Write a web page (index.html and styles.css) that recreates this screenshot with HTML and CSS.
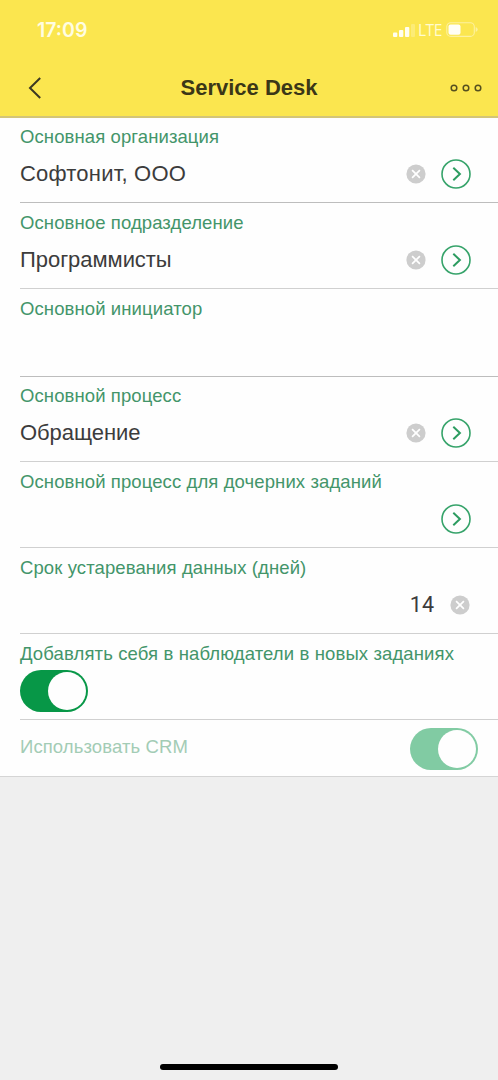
FILE: index.html
```html
<!DOCTYPE html>
<html lang="ru">
<head>
<meta charset="utf-8">
<title>Service Desk</title>
<link rel="stylesheet" href="styles.css">
</head>
<body>
<svg class="defs" width="0" height="0">
  <symbol id="clear" viewBox="0 0 20 20"><circle cx="10" cy="10" r="9.6" fill="#cdcdcd"/><path d="M6.1 6.1l7.8 7.8M13.9 6.1l-7.8 7.8" stroke="#fff" stroke-width="1.7" fill="none"/></symbol>
  <symbol id="open" viewBox="0 0 30 30"><circle cx="15" cy="15" r="14" fill="none" stroke="#36a36a" stroke-width="1.6"/><path d="M12.3 8.8l6.6 6.2-6.6 6.2" fill="none" stroke="#2c9c60" stroke-width="2"/></symbol>
</svg>
<div class="screen">
  <header class="header">
    <div class="status">
      <span class="time">17:09</span>
      <div class="indicators">
        <svg class="signal" width="22" height="14" viewBox="0 0 22 14"><g fill="#fffef0"><rect x="0" y="8.5" width="4.3" height="4.5" rx="1"/><rect x="6" y="6" width="4.3" height="7" rx="1"/><rect x="12" y="3" width="4.3" height="10" rx="1"/><rect x="18" y="0" width="4" height="13" rx="1" opacity=".25"/></g></svg>
        <span class="lte">LTE</span>
        <svg class="battery" width="32" height="16" viewBox="0 0 32 16"><rect x=".8" y=".8" width="27.5" height="13.6" rx="4" fill="none" stroke="#fffef0" stroke-width="1.1" opacity=".5"/><rect x="2.5" y="2.5" width="12" height="10.2" rx="2" fill="#fffef6"/><path d="M29.7 5v5q2-.8 2-2.5t-2-2.5z" fill="#fffef0" opacity=".5"/></svg>
      </div>
    </div>
    <div class="nav">
      <svg class="back" width="14" height="22" viewBox="0 0 14 22"><path d="M12.2 1L2 11l10.2 10" fill="none" stroke="#3c3822" stroke-width="2"/></svg>
      <h1 class="title">Service Desk</h1>
      <svg class="more" width="32" height="8" viewBox="0 0 32 8"><g fill="none" stroke="#55501f" stroke-width="1.5"><circle cx="4" cy="4" r="2.8"/><circle cx="16" cy="4" r="2.8"/><circle cx="28" cy="4" r="2.8"/></g></svg>
    </div>
  </header>
  <main class="form">
    <section class="field first">
      <div class="label">Основная организация</div>
      <div class="line"><span class="value spaced">Софтонит, ООО</span><svg class="clear"><use href="#clear"/></svg><svg class="open"><use href="#open"/></svg></div>
    </section>
    <section class="field">
      <div class="label">Основное подразделение</div>
      <div class="line"><span class="value">Программисты</span><svg class="clear"><use href="#clear"/></svg><svg class="open"><use href="#open"/></svg></div>
    </section>
    <section class="field tall">
      <div class="label">Основной инициатор</div>
    </section>
    <section class="field short">
      <div class="label">Основной процесс</div>
      <div class="line"><span class="value">Обращение</span><svg class="clear"><use href="#clear"/></svg><svg class="open"><use href="#open"/></svg></div>
    </section>
    <section class="field">
      <div class="label">Основной процесс для дочерних заданий</div>
      <div class="line"><span class="value"></span><svg class="open"><use href="#open"/></svg></div>
    </section>
    <section class="field">
      <div class="label">Срок устаревания данных (дней)</div>
      <div class="line numeric"><span class="value number">14</span><svg class="clear"><use href="#clear"/></svg></div>
    </section>
    <section class="field watch">
      <div class="label">Добавлять себя в наблюдатели в новых заданиях</div>
      <div class="toggle"><span class="knob"></span></div>
    </section>
    <section class="field inline">
      <div class="label">Использовать CRM</div>
      <div class="toggle"><span class="knob"></span></div>
    </section>
  </main>
  <footer class="footer"><div class="home"></div></footer>
</div>
</body>
</html>
```
FILE: styles.css
```css
* { box-sizing: border-box; }
body { margin: 0; font-family: "Liberation Sans", Arial, sans-serif; background: #efefef; }
.defs { display: block; }
.screen { width: 498px; height: 1080px; display: flex; flex-direction: column; overflow: hidden; }
.header { height: 118px; background: #fbe64f; border-bottom: 2px solid #d3c578; }
.status { height: 60px; padding: 0 20px 0 37px; display: flex; align-items: center; justify-content: space-between; }
.time { font: 600 19.5px/24px Inter, sans-serif; color: #fffde2; }
.indicators { display: flex; align-items: center; }
.signal { margin-top: 1px; margin-right: 3px; }
.lte { width: 24px; margin-right: 4px; font: 500 15.5px/20px "Open Sans", sans-serif; letter-spacing: -0.5px; color: #fffcd0; }
.nav { height: 56px; padding: 0 16px 0 28px; display: grid; grid-template-columns: 32px 1fr 32px; align-items: center; }
.title { margin: 0; padding-right: 12px; text-align: center; font-size: 22px; line-height: 28px; color: #3b3717; }
.form { background: #fefefe; border-bottom: 1px solid #d5d5d5; height: 659px; padding-left: 20px; }
.field { height: 86px; padding-top: 9px; border-bottom: 1px solid #d0d0d0; }
.first, .short { height: 85px; padding-top: 8px; }
.tall { height: 88px; }
.first, .tall { border-bottom-color: #bdbdbd; }
.label { font-size: 18.5px; line-height: 22px; letter-spacing: 0.1px; color: #43956a; white-space: nowrap; }
.line { height: 30px; margin-top: 11px; padding-right: 27px; display: flex; align-items: center; }
.value { flex: 1; font-size: 22px; line-height: 28px; letter-spacing: -0.05px; color: #3c3c3c; white-space: nowrap; }
.spaced { letter-spacing: 0.2px; }
.clear { width: 20px; height: 20px; margin-right: 15px; }
.open { width: 30px; height: 30px; }
.numeric { padding-right: 13px; }
.number { text-align: right; margin-right: 16px; font-family: Roboto, sans-serif; font-size: 21.5px; letter-spacing: 0; }
.toggle { width: 68px; height: 42px; margin-top: 5px; padding: 2px; border-radius: 21px; background: #079747; display: flex; justify-content: flex-end; }
.knob { width: 38px; height: 38px; border-radius: 50%; background: #fefefe; }
.watch .label { letter-spacing: 0.12px; }
.inline { height: 57px; padding: 0 20px 0 0; border: 0; display: flex; align-items: center; justify-content: space-between; }
.inline .label { color: #a3ccb5; margin-top: -3px; }
.inline .toggle { background: #81cba3; margin-top: 0; }
.footer { flex: 1; padding-bottom: 10px; display: flex; align-items: flex-end; justify-content: center; }
.home { width: 178px; height: 6px; border-radius: 3px; background: #000; }
```
